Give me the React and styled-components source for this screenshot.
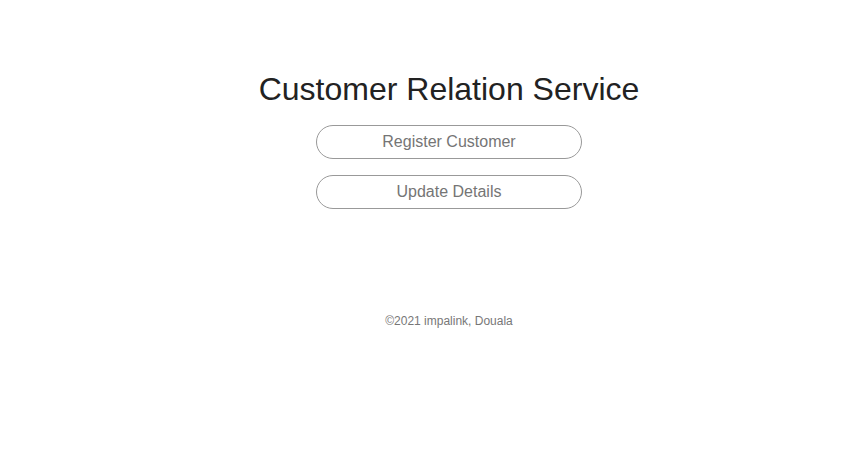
import React from "react";
import styled, { createGlobalStyle } from "styled-components";

const GlobalStyle = createGlobalStyle`
    body {
        margin: 0;
        background: #fff;
        font-family: "Liberation Sans", Arial, sans-serif;
        color: #212529;
    }
`;

const Page = styled.div`
    display: flex;
    flex-direction: column;
    align-items: center;
    padding: 70px 0 0 39px;
`;

const Title = styled.h1`
    margin: 0 0 17px;
    font-size: 32px;
    font-weight: 400;
    line-height: 38px;
    color: #222;
`;

const Menu = styled.div`
    display: flex;
    flex-direction: column;
    gap: 16px;
`;

const MenuButton = styled.button`
    width: 266px;
    height: 34px;
    border: 1px solid #999;
    border-radius: 17px;
    background: #fff;
    color: #757575;
    font-family: "Liberation Sans", Arial, sans-serif;
    font-size: 16px;
    cursor: pointer;
`;

const Footer = styled.footer`
    margin-top: 105px;
    font-size: 12px;
    line-height: 14px;
    color: #777;
`;

export default function App() {
    return (
        <>
            <GlobalStyle />
            <Page>
                <Title>Customer Relation Service</Title>
                <Menu>
                    <MenuButton>Register Customer</MenuButton>
                    <MenuButton>Update Details</MenuButton>
                </Menu>
                <Footer>©2021 impalink, Douala</Footer>
            </Page>
        </>
    );
}
